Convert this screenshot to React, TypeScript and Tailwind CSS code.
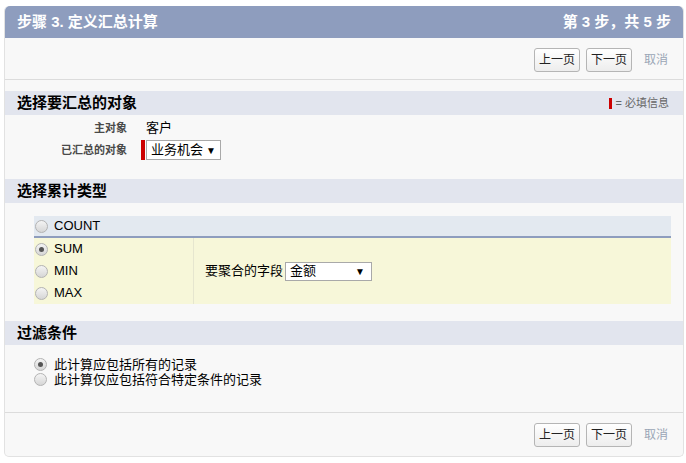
import React from "react";

const font = { fontFamily: '"Liberation Sans", Arial, "Noto Sans CJK SC", sans-serif' };

function Radio({ checked = false }: { checked?: boolean }) {
  return (
    <span className="flex h-[13px] w-[13px] shrink-0 items-center justify-center rounded-full border border-[#b3b3b3] bg-gradient-to-b from-[#f4f4f4] to-[#d6d6d6]">
      {checked && <span className="h-[5px] w-[5px] rounded-full bg-[#555]" />}
    </span>
  );
}

function NavButtons() {
  return (
    <div className="flex items-center gap-[6px]">
      <button className="h-[24px] w-[46px] rounded-[3px] border border-[#b5b5b5] bg-gradient-to-b from-white to-[#ededed] text-[12px] text-[#222]">
        上一页
      </button>
      <button className="h-[24px] w-[46px] rounded-[3px] border border-[#b5b5b5] bg-gradient-to-b from-white to-[#ededed] text-[12px] text-[#222]">
        下一页
      </button>
      <span className="ml-[6px] text-[12px] text-[#9aa6b6]">取消</span>
    </div>
  );
}

function SectionHeader({ title, children }: { title: string; children?: React.ReactNode }) {
  return (
    <div className="flex h-[24px] items-center justify-between bg-[#e2e5ee] pl-[12px] pr-[14px]">
      <h2 className="text-[15px] font-bold text-black">{title}</h2>
      {children}
    </div>
  );
}

export default function App() {
  return (
    <div className="h-[463px] w-[686px] bg-white pl-[4px] pt-[6px]" style={font}>
      <div className="flex h-[451px] w-[680px] flex-col rounded-[5px] border border-[#e2e2e2] border-t-0 bg-[#f8f8f8]">
        <div className="flex h-[32px] items-center justify-between rounded-t-[5px] bg-[#8e9dbe] px-[12px] text-[15px] font-bold text-white">
          <span>步骤 3. 定义汇总计算</span>
          <span>第 3 步，共 5 步</span>
        </div>

        <div className="flex h-[42px] items-center justify-end border-b border-[#dcdcdc] pr-[15px] pt-[2px]">
          <NavButtons />
        </div>

        <div className="mt-[11px]">
          <SectionHeader title="选择要汇总的对象">
            <span className="flex items-center gap-[4px] text-[11px] text-[#666]">
              <span className="h-[11px] w-[3px] bg-[#c00]" />
              <span>= 必填信息</span>
            </span>
          </SectionHeader>
          <div className="grid grid-cols-[122px_1fr] items-center gap-x-[19px] gap-y-[2px] pt-[3px]">
            <span className="text-right text-[11px] font-bold text-[#4a4a4a]">主对象</span>
            <span className="h-[20px] text-[13px] leading-[20px] text-black">客户</span>
            <span className="text-right text-[11px] font-bold text-[#4a4a4a]">已汇总的对象</span>
            <div className="-ml-[5px] flex items-center gap-[1px]">
              <span className="h-[20px] w-[4px] bg-[#c00]" />
              <div className="flex h-[20px] w-[75px] items-center justify-between border border-[#a9a9a9] bg-white pl-[4px] pr-[4px] text-[13px]">
                <span>业务机会</span>
                <span className="text-[10px]">▼</span>
              </div>
            </div>
          </div>
        </div>

        <div className="mt-[19px]">
          <SectionHeader title="选择累计类型" />
          <div className="ml-[29px] mr-[12px] mt-[13px] text-[13px] text-black">
            <div className="flex h-[22px] items-center gap-[6px] border-b-2 border-[#8e9dbe] bg-[#e3e9f0] pl-[1px]">
              <Radio />
              <span>COUNT</span>
            </div>
            <div className="grid grid-cols-[160px_1fr] bg-[#f7f7d9]">
              <div className="flex flex-col border-r border-[#e6e6cf]">
                {["SUM", "MIN", "MAX"].map((t, i) => (
                  <div key={t} className="flex h-[22px] items-center gap-[6px] pl-[1px]">
                    <Radio checked={i === 0} />
                    <span>{t}</span>
                  </div>
                ))}
              </div>
              <div className="flex items-center gap-[2px] pl-[11px]">
                <span>要聚合的字段</span>
                <div className="flex h-[19px] w-[87px] items-center justify-between border border-[#a9a9a9] bg-white pl-[4px] pr-[6px]">
                  <span>金额</span>
                  <span className="text-[10px]">▼</span>
                </div>
              </div>
            </div>
          </div>
        </div>

        <div className="mt-[17px]">
          <SectionHeader title="过滤条件" />
          <div className="ml-[29px] mt-[12px] flex flex-col text-[13px] leading-[15px] text-black">
            <div className="flex items-center gap-[7px]">
              <Radio checked />
              <span>此计算应包括所有的记录</span>
            </div>
            <div className="flex items-center gap-[7px]">
              <Radio />
              <span>此计算仅应包括符合特定条件的记录</span>
            </div>
          </div>
        </div>

        <div className="mt-auto flex h-[44px] items-center justify-end border-t border-[#dcdcdc] pr-[15px]">
          <NavButtons />
        </div>
      </div>
    </div>
  );
}
